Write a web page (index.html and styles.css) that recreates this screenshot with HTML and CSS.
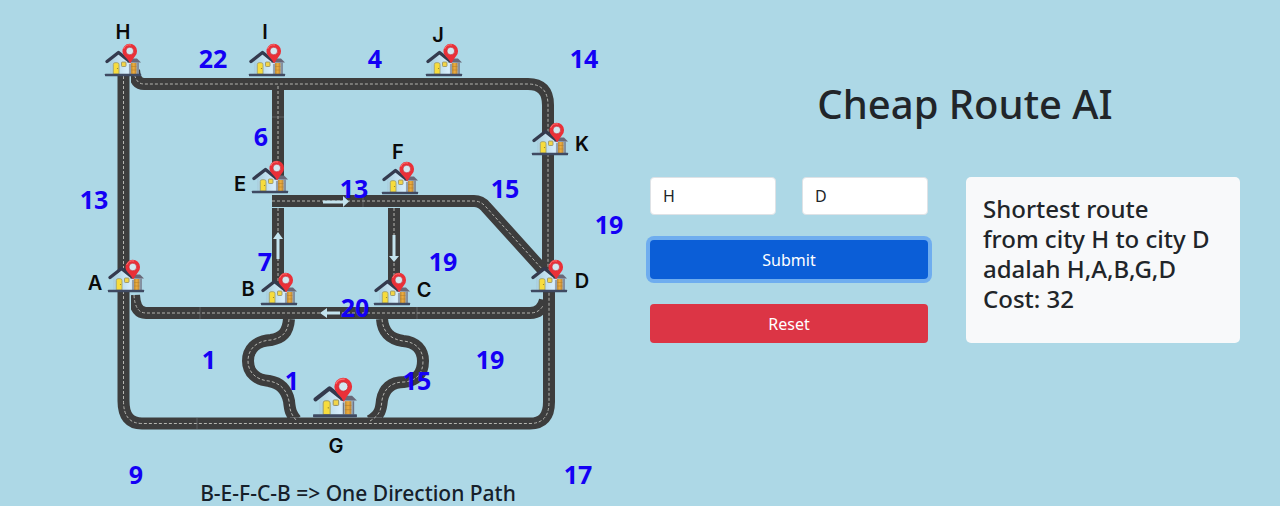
FILE: index.html
```html
<!DOCTYPE html>
<html lang="en">
<head>
<meta charset="utf-8">
<meta name="viewport" content="width=device-width, initial-scale=1">
<title>Cheap Route AI</title>
<link rel="stylesheet" href="styles.css">
</head>
<body>
<main class="page">
  <section class="map-pane">
    <svg class="map" viewBox="0 0 640 506" role="img" aria-label="City route map">
      <defs>
        <linearGradient id="wall" x1="0" x2="1" y1="0" y2="0">
          <stop offset="0" stop-color="#a9cfdf"/>
          <stop offset=".6" stop-color="#d6edfb"/>
          <stop offset="1" stop-color="#9fb6c6"/>
        </linearGradient>
        <linearGradient id="lamp" x1="0" x2="1" y1="0" y2="0">
          <stop offset="0" stop-color="#b98a3c"/>
          <stop offset=".5" stop-color="#f0ae3a"/>
          <stop offset="1" stop-color="#b5813a"/>
        </linearGradient>
        <symbol id="house" viewBox="0 0 36 32" overflow="visible">
          <path d="M5 17 14 9.500 24 17H34V30H5Z" fill="url(#wall)"/>
          <path d="M22 18.500 25 14.500H32L36 18.500Z" fill="#696878"/>
          <path d="M2 17.500 13.500 8.500 24 17" fill="none" stroke="#343a4e" stroke-width="3.400" stroke-linecap="round" stroke-linejoin="round"/>
          <path d="M8.300 30V20.500Q8.300 18.700 10 18.700H12.200Q14 18.700 14 20.500V30Z" fill="#f7dc3c" stroke="#9a9a6a" stroke-width=".8"/>
          <circle cx="12.500" cy="24.500" r=".6" fill="#8d7a2a"/>
          <rect x="16.500" y="18" width="4.500" height="4.500" rx=".8" fill="#f2d548" stroke="#8f8c66" stroke-width=".8"/>
          <rect x="26" y="19" width="5.500" height="11" fill="url(#lamp)"/>
          <path d="M26 22.500H31.500M26 26H31.500" stroke="#b07c2d" stroke-width=".5"/>
          <path d="M25 20V30M33 19V30" stroke="#6f7686" stroke-width="1.200"/>
          <rect x="0" y="29.800" width="36" height="2.400" rx=".4" fill="#3f4a62"/>
          <path d="M25.200 19.600Q23.500 16 19.800 12.500A7.300 7.300 0 1 1 30 12.200Q27 16 25.200 19.600Z" fill="#ea3038"/>
          <path d="M18.600 5A6.500 6.500 0 0 1 26 1" fill="none" stroke="#f87474" stroke-width="1"/>
          <circle cx="24.800" cy="7" r="3.800" fill="#d3e8f0" stroke="#c4252f" stroke-width=".6"/>
        </symbol>
        <g id="lane-paths">
          <path d="M123.500 66V401Q123.500 423.500 142 423.500H530Q549 423.500 549 402V270"/>
          <path d="M278 86V180"/>
          <path d="M278 208V285"/>
          <path d="M394 208V285"/>
          <path d="M272 201H474Q481 201 486 207L543 270"/>
          <path d="M289 319C288 333 282 338 271 340C255 341 248 350 248 361C248 373 257 380 269 381C281 383 287 391 289 401C290 411 291 414 296 420"/>
          <path d="M382 319C383 333 391 339 403 341C416 342 423 350 423 361C423 374 416 381 404 382C391 382 384 389 382 400C381 410 380 415 370 421"/>
        </g>
        <g id="ring-paths">
          <path d="M134 70Q135 84 144 84H528Q548 84 548 105V280"/>
          <path d="M134 295Q135 313 146 313H530Q542 313 545 300"/>
        </g>
      </defs>

      <use href="#ring-paths" class="road"/>
      <use href="#ring-paths" class="dash"/>
      <path class="ground" d="M117 70H131V430H117Z"/>
      <use href="#lane-paths" class="road"/>
      <use href="#lane-paths" class="dash"/>
      <path class="seam" d="M197 418V429M272 117H284M200 307V319M417 307V319M363 195V207M290 417.500H382"/>

      <g class="arrow">
        <path d="M323 202H344M278 259V239M394 235V256M340 313H326"/>
        <path class="head" d="M343 196V207L349 201.500ZM273 239H283L278 232ZM389 256H399L394 262ZM327 308V318L320 313Z"/>
      </g>

      <use href="#house" x="105" y="44" width="36" height="32"/>
      <use href="#house" x="249" y="44" width="36" height="32"/>
      <use href="#house" x="426" y="44" width="36" height="32"/>
      <use href="#house" x="532" y="123" width="36" height="32"/>
      <use href="#house" x="252" y="161" width="36" height="32"/>
      <use href="#house" x="382" y="162" width="36" height="32"/>
      <use href="#house" x="108" y="260" width="36" height="32"/>
      <use href="#house" x="261" y="273" width="36" height="32"/>
      <use href="#house" x="374" y="273" width="36" height="32"/>
      <use href="#house" x="531" y="260" width="36" height="32"/>
      <use href="#house" x="313" y="378" width="44" height="39"/>

      <g class="city">
        <text x="123" y="39">H</text>
        <text x="265" y="39">I</text>
        <text x="438" y="42">J</text>
        <text x="582" y="151">K</text>
        <text x="398" y="159">F</text>
        <text x="240" y="191">E</text>
        <text x="95" y="290">A</text>
        <text x="248" y="296">B</text>
        <text x="424" y="297">C</text>
        <text x="582" y="288">D</text>
        <text x="336" y="453">G</text>
      </g>

      <g class="cost">
        <text x="213" y="68">22</text>
        <text x="375" y="68">4</text>
        <text x="584" y="68">14</text>
        <text x="261" y="146">6</text>
        <text x="94" y="209">13</text>
        <text x="354" y="198">13</text>
        <text x="505" y="198">15</text>
        <text x="609" y="234">19</text>
        <text x="265" y="271">7</text>
        <text x="443" y="271">19</text>
        <text x="355" y="317">20</text>
        <text x="209" y="369">1</text>
        <text x="292" y="390">1</text>
        <text x="417" y="390">15</text>
        <text x="490" y="369">19</text>
        <text x="136" y="484">9</text>
        <text x="578" y="484">17</text>
      </g>

      <text class="note" x="358" y="501">B-E-F-C-B =&gt; One Direction Path</text>
    </svg>
  </section>

  <section class="panel">
    <h1 class="title">Cheap Route AI</h1>
    <div class="columns">
      <form class="form" onsubmit="return false">
        <div class="fields">
          <input class="field" type="text" value="H" aria-label="Start city">
          <input class="field" type="text" value="D" aria-label="Destination city">
        </div>
        <button class="btn btn-submit" type="submit">Submit</button>
        <button class="btn btn-reset" type="reset">Reset</button>
      </form>
      <div class="result">
        <p class="result-text">Shortest route<br>from city H to city D<br>adalah H,A,B,G,D<br>Cost: 32</p>
      </div>
    </div>
  </section>
</main>
</body>
</html>
```

FILE: styles.css
```css
* {
  box-sizing: border-box;
}

body {
  margin: 0;
  background: #add8e6;
  color: #212529;
  font-family: "Noto Sans", "Open Sans", sans-serif;
  font-size: 16px;
  line-height: 24px;
}

.page {
  display: grid;
  grid-template-columns: 1fr 1fr;
}

.map {
  display: block;
  width: 100%;
}

.road {
  fill: none;
  stroke: #3d3d3d;
  stroke-width: 12;
}

.dash {
  fill: none;
  stroke: #b5b5b0;
  stroke-width: 1;
  stroke-dasharray: 3 2;
}

.ground {
  fill: #add8e6;
}

.seam {
  fill: none;
  stroke: #8b9499;
  stroke-width: 1;
  opacity: 0.4;
}

.arrow {
  fill: none;
  stroke: #c3e3ee;
  stroke-width: 3;
}

.head {
  fill: #c3e3ee;
  stroke: none;
}

.city {
  fill: #0a0a0a;
  font-family: Inter, "Noto Sans", sans-serif;
  font-size: 20px;
  font-weight: 600;
  text-anchor: middle;
}

.cost {
  fill: #1400f5;
  font-size: 25px;
  font-weight: 700;
  text-anchor: middle;
}

.note {
  fill: #16202a;
  font-size: 21px;
  font-weight: 500;
  text-anchor: middle;
}

.panel {
  padding: 80px 40px 0 10px;
}

.title {
  margin: 0 0 49px;
  padding-left: 40px;
  font-size: 40px;
  font-weight: 500;
  line-height: 48px;
  text-align: center;
}

.columns {
  display: grid;
  grid-template-columns: 278fr 274fr;
  gap: 38px;
}

.form {
  display: flex;
  flex-direction: column;
  gap: 25px;
}

.fields {
  display: grid;
  grid-template-columns: 1fr 1fr;
  gap: 26px;
}

.field {
  width: 100%;
  min-width: 0;
  height: 38px;
  padding: 6px 12px;
  border: 1px solid #dee2e6;
  border-radius: 4px;
  background: #fff;
  color: #212529;
  font: inherit;
}

.btn {
  height: 39px;
  padding: 6px 12px;
  border: 0;
  border-radius: 4px;
  color: #fff;
  font: inherit;
}

.btn-submit {
  background: #0b5ed7;
  box-shadow: 0 0 0 4px #6fadef;
}

.btn-reset {
  background: #dc3545;
}

.result {
  padding: 17px;
  border-radius: 5px;
  background: #f8f9fa;
}

.result-text {
  margin: 0;
  font-size: 24px;
  font-weight: 500;
  line-height: 30px;
  white-space: nowrap;
}
```
